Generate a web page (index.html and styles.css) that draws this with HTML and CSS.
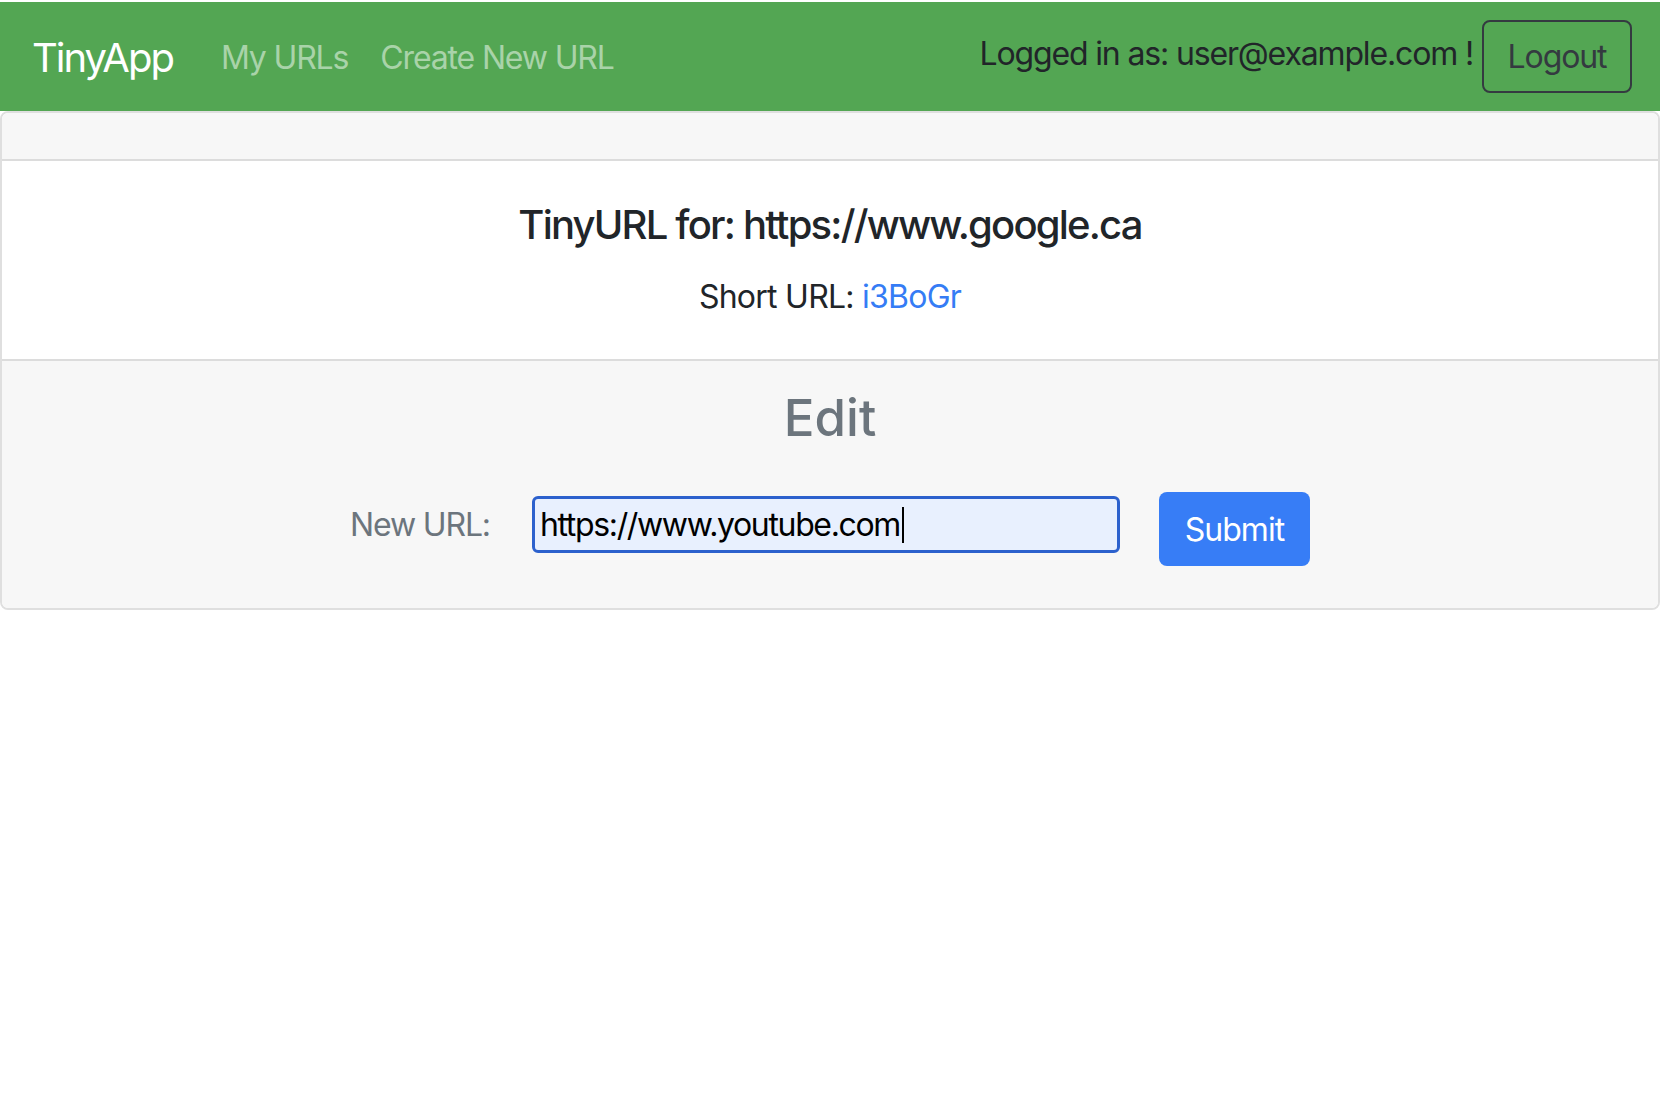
FILE: index.html
```html
<!DOCTYPE html>
<html lang="en">
<head>
<meta charset="utf-8">
<title>TinyApp</title>
<link rel="stylesheet" href="styles.css">
</head>
<body>
<div class="page">
  <nav class="navbar">
    <a class="brand" href="#">TinyApp</a>
    <div class="nav-links">
      <a class="nav-link" href="#">My URLs</a>
      <a class="nav-link" href="#">Create New URL</a>
    </div>
    <form class="user-form">
      <span class="user-text">Logged in as: user@example.com !</span>
      <button type="button" class="btn-logout">Logout</button>
    </form>
  </nav>

  <main class="card">
    <div class="card-header"></div>
    <div class="card-body">
      <h5 class="card-title">TinyURL for: https://www.google.ca</h5>
      <p class="card-text">Short URL: <a class="short-link" href="#">i3BoGr</a></p>
    </div>
    <div class="card-footer">
      <h4 class="edit-title">Edit</h4>
      <form class="edit-form">
        <label class="edit-label">New URL:</label>
        <div class="url-input" role="textbox"><span class="url-value">https://www.youtube.com</span><span class="caret"></span></div>
        <button type="button" class="btn-submit">Submit</button>
      </form>
    </div>
  </main>
</div>
</body>
</html>
```

FILE: styles.css
```css
* {
  box-sizing: border-box;
}

html, body {
  margin: 0;
  background: #ffffff;
}

body {
  font-family: Inter, "Noto Sans", "Liberation Sans", sans-serif;
  color: #212529;
}

.page {
  padding: 2px 4px 0 0;
}

/* Navbar */
.navbar {
  display: flex;
  align-items: center;
  height: 109px;
  padding: 0 28px 0 32px;
  background: #53a653;
}

.brand {
  font-size: 40px;
  line-height: 60px;
  letter-spacing: -2px;
  color: #ffffff;
  text-decoration: none;
  margin: 2px 32px 0 0;
}

.nav-links {
  display: flex;
  align-items: center;
  margin-top: 2px;
}

.nav-link {
  font-size: 32px;
  line-height: 48px;
  letter-spacing: -1.15px;
  padding: 0 16px;
  color: #a9d3a9;
  text-decoration: none;
}

.user-form {
  margin: 0 0 0 auto;
  display: flex;
  align-items: center;
}

.user-text {
  font-size: 32px;
  line-height: 48px;
  letter-spacing: -1.15px;
  color: #212529;
  margin: 0 9px 6px 0;
}

.btn-logout {
  width: 150px;
  height: 73px;
  font-family: inherit;
  font-size: 32px;
  letter-spacing: -1.1px;
  color: #343a40;
  background: transparent;
  border: 2px solid #343a40;
  border-radius: 8px;
  padding: 0;
}

/* Card */
.card {
  border: 2px solid #dfdfdf;
  border-radius: 8px;
  overflow: hidden;
}

.card-header {
  height: 48px;
  background: #f7f7f7;
  border-bottom: 2px solid #dcdcdc;
}

.card-body {
  padding: 40px 40px 38px;
  text-align: center;
  background: #ffffff;
}

.card-title {
  margin: 0 0 24px;
  font-size: 40px;
  line-height: 48px;
  letter-spacing: -1.8px;
  font-weight: 500;
  color: #212529;
}

.card-text {
  margin: 0;
  font-size: 32px;
  line-height: 48px;
  letter-spacing: -0.75px;
}

.short-link {
  color: #357cf5;
  text-decoration: none;
}

.card-footer {
  background: #f7f7f7;
  border-top: 2px solid #dcdcdc;
  padding: 24px 40px 24px;
  text-align: center;
}

.edit-title {
  margin: 4px 0 36px;
  font-size: 51px;
  line-height: 58px;
  font-weight: 500;
  color: #6c757d;
}

.edit-form {
  display: flex;
  justify-content: center;
  align-items: center;
  margin-bottom: 18px;
}

.edit-label {
  font-size: 32px;
  line-height: 48px;
  letter-spacing: -1.15px;
  color: #6c757d;
  margin-right: 42px;
}

.url-input {
  display: flex;
  align-items: center;
  width: 588px;
  height: 57px;
  padding: 0 5px;
  border: 3px solid #2c61cd;
  border-radius: 6px;
  background: #e8f0fe;
  font-size: 32px;
  letter-spacing: -1.35px;
  color: #000000;
  text-align: left;
}

.caret {
  width: 2px;
  height: 36px;
  background: #000000;
  margin-left: 2px;
}

.btn-submit {
  width: 151px;
  height: 74px;
  margin: 9px 0 0 39px;
  font-family: inherit;
  font-size: 32px;
  letter-spacing: -1px;
  color: #ffffff;
  background: #377df6;
  border: none;
  border-radius: 8px;
  padding: 0;
}
```
